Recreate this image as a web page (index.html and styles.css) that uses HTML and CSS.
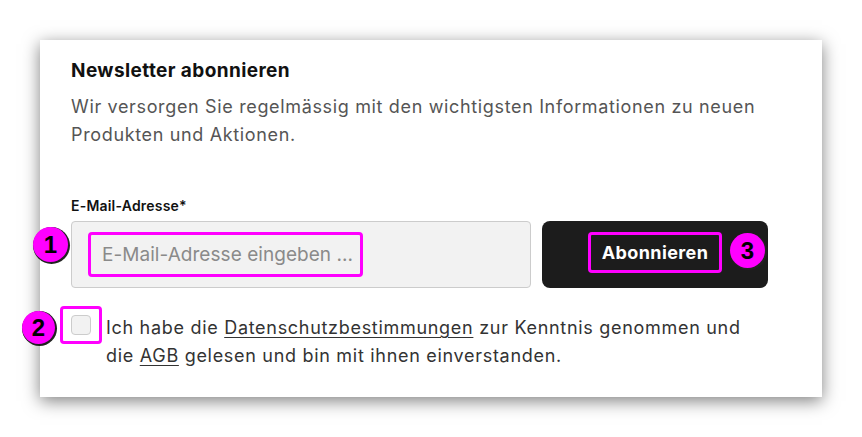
FILE: index.html
```html
<!DOCTYPE html>
<html lang="de">
<head>
<meta charset="utf-8">
<link rel="stylesheet" href="styles.css">
</head>
<body>
<div class="card">
  <h2 class="title">Newsletter abonnieren</h2>
  <p class="desc">Wir versorgen Sie regelmässig mit den wichtigsten Informationen zu neuen Produkten und Aktionen.</p>
  <label class="label">E-Mail-Adresse*</label>
  <div class="row">
    <div class="field">
      <span class="badge b1">1</span>
      <span class="hl hl-input"><span class="ph">E-Mail-Adresse eingeben ...</span></span>
    </div>
    <div class="btn">
      <span class="hl hl-btn">Abonnieren</span>
      <span class="badge b3">3</span>
    </div>
  </div>
  <div class="check">
    <span class="badge b2">2</span>
    <span class="hl hl-check"><span class="box"></span></span>
    <p class="check-text">Ich habe die <a class="link">Datenschutzbestimmungen</a> zur Kenntnis genommen und die <a class="link">AGB</a> gelesen und bin mit ihnen einverstanden.</p>
  </div>
</div>
</body>
</html>
```
FILE: styles.css
```css
* { box-sizing: border-box; }
html, body { min-height: 437px; }
body {
  margin: 0;
  padding: 40px 0 40px 40px;
  background: #fff;
  font-family: "Inter", "Liberation Sans", sans-serif;
}
.card {
  position: relative;
  width: 782px;
  height: 357px;
  background: #fff;
  box-shadow: 0 4px 16px rgba(0,0,0,0.5);
  padding: 19px 54px 0 31px;
}
.title {
  margin: 0;
  font-size: 19px;
  line-height: 24px;
  font-weight: 700;
  color: #111;
  letter-spacing: 0.4px;
}
.desc {
  margin: 10px 0 0;
  font-size: 18px;
  line-height: 28px;
  color: #555;
  letter-spacing: 0.65px;
}
.label {
  display: block;
  margin-top: 48px;
  font-size: 14px;
  line-height: 18px;
  font-weight: 600;
  color: #111;
  letter-spacing: 0.2px;
}
.row {
  display: flex;
  gap: 11px;
  margin-top: 6px;
}
.field {
  position: relative;
  width: 460px;
  height: 67px;
  background: #f2f2f2;
  border: 1px solid #ccc;
  border-radius: 4px;
  padding: 10px 0 0 16px;
}
.hl {
  border: 3px solid #ff00ff;
  border-radius: 4px;
  display: inline-flex;
  align-items: center;
}
.hl-input {
  width: 275px;
  height: 45px;
  padding-left: 11px;
}
.ph {
  font-size: 19px;
  color: #8a8a8a;
  letter-spacing: 0.05px;
}
.btn {
  position: relative;
  width: 226px;
  height: 67px;
  background: #1c1c1c;
  border-radius: 8px;
  display: flex;
  padding: 11px 0 0 46px;
}
.hl-btn {
  width: 134px;
  height: 41px;
  justify-content: center;
  color: #fff;
  font-weight: 700;
  font-size: 18px;
  letter-spacing: 0.4px;
}
.badge {
  position: absolute;
  width: 35px;
  height: 35px;
  border-radius: 50%;
  background: #ff00ff;
  box-shadow: 1px 1px 0 1px #222;
  font-family: "Liberation Sans", Arial, sans-serif;
  font-weight: 700;
  font-size: 24px;
  color: #000;
  display: flex;
  align-items: center;
  justify-content: center;
  z-index: 2;
}
.b1 { left: -39px; top: 5px; }
.b3 { left: 188px; top: 12px; }
.b2 { left: -49px; top: 5px; width: 33px; height: 33px; }
.check {
  position: relative;
  display: flex;
  align-items: flex-start;
  margin-top: 18px;
}
.hl-check {
  margin-left: -11px;
  width: 42px;
  height: 38px;
  justify-content: center;
  flex-shrink: 0;
}
.box {
  width: 20px;
  height: 20px;
  border: 1px solid #ccc;
  border-radius: 4px;
  background: #f2f2f2;
}
.check-text {
  margin: 8px 0 0 4px;
  font-size: 18px;
  line-height: 28px;
  color: #333;
  width: 655px;
  letter-spacing: 0.7px;
}
.link {
  color: inherit;
  text-decoration: underline;
  text-decoration-thickness: 1px;
  text-underline-offset: 3px;
}
```
